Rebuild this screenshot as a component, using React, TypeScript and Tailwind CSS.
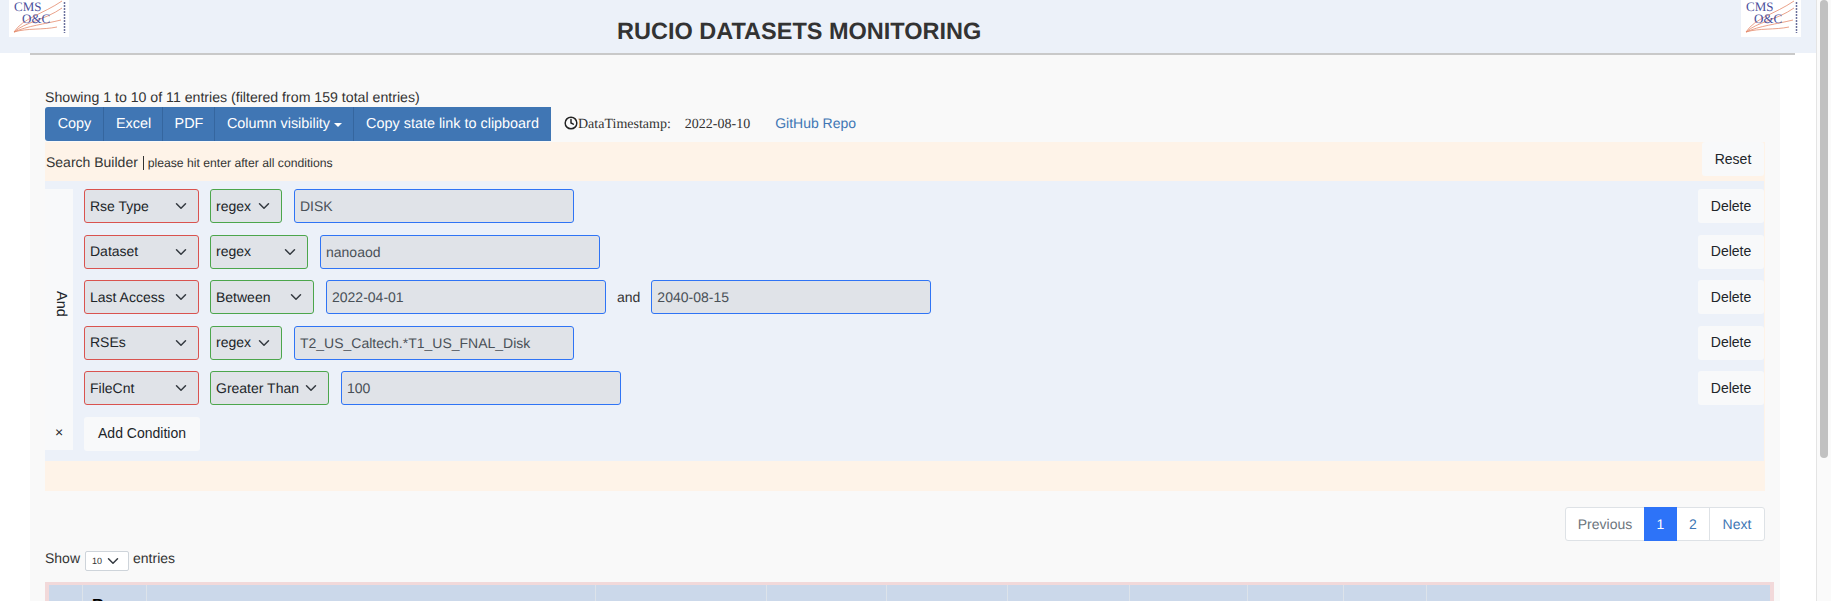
import { Clock } from "lucide-react"

const sans = "font-['Liberation_Sans',Arial,sans-serif]"

const conditions = [
  { column: "Rse Type", op: "regex", opWidth: "w-[72px]", values: ["DISK"] },
  { column: "Dataset", op: "regex", opWidth: "w-[98px]", values: ["nanoaod"] },
  { column: "Last Access", op: "Between", opWidth: "w-[104px]", values: ["2022-04-01", "2040-08-15"] },
  { column: "RSEs", op: "regex", opWidth: "w-[72px]", values: ["T2_US_Caltech.*T1_US_FNAL_Disk"] },
  { column: "FileCnt", op: "Greater Than", opWidth: "w-[119px]", values: ["100"] },
]

const columns = ["w-[34px]", "w-[64px]", "w-[449px]", "w-[171px]", "w-[120px]", "w-[121px]", "w-[122px]", "w-[118px]", "w-[96px]", "w-[83px]", "flex-1"]

function Chevron({ className = "w-3 h-3" }: { className?: string }) {
  return (
    <svg viewBox="0 0 16 16" className={className} fill="none" stroke="#343a40" strokeWidth="2" strokeLinecap="round" strokeLinejoin="round">
      <path d="M2 5l6 6 6-6" />
    </svg>
  )
}

function Logo() {
  return (
    <svg viewBox="0 0 60 37" className="w-[60px] h-[37px] bg-white shrink-0">
      <g fill="none" stroke="#e58a6c" strokeWidth="0.8">
        <path d="M5 32C14 18 34 14 53 1" />
        <path d="M5 32C16 22 36 20 53 8" />
        <path d="M5 32C18 26 36 24 52 20" />
        <path d="M5 32C18 28 34 30 48 27" />
      </g>
      <text x="5" y="11" fontFamily="Liberation Serif" fontSize="13" fill="#4a4f9c">CMS</text>
      <text x="13" y="23" fontFamily="Liberation Serif" fontSize="13" fill="#4a4f9c">O&amp;C</text>
      <path d="M55.5 2v31" stroke="#6a6f9c" strokeWidth="1.5" strokeDasharray="2 1" />
    </svg>
  )
}

function Select({ label, className }: { label: string; className: string }) {
  return (
    <div className={`h-[34px] shrink-0 flex items-center justify-between pl-[5px] pr-[11px] rounded-[3px] border bg-[#e0e3e8] text-[14px] text-[#212529] ${className}`}>
      <span>{label}</span>
      <Chevron />
    </div>
  )
}

function ValueInput({ value }: { value: string }) {
  return (
    <div className="h-[34px] w-[280px] shrink-0 flex items-center pl-[5px] pt-[1px] rounded-[3px] border border-[#2f74f5] bg-[#e0e3e8] text-[14px] text-[#495057]">
      {value}
    </div>
  )
}

export default function App() {
  return (
    <div className={`flex h-screen overflow-hidden bg-white text-[#212529] text-[14px] [text-rendering:geometricPrecision] ${sans}`}>
      <div className="flex-1 min-w-0">
        {/* Header */}
        <div className="h-[53px] bg-[#ecf1f9] flex items-start pl-[9px] pr-[15px]">
          <Logo />
          <h1 className="ml-[548px] mt-[18px] text-[23.5px] leading-[26px] font-bold text-[#333] whitespace-nowrap">
            RUCIO DATASETS MONITORING
          </h1>
          <div className="ml-auto">
            <Logo />
          </div>
        </div>
        <div className="h-[2px] ml-[30px] mr-[21px] bg-[#c9c9c9]" />

        {/* Panel */}
        <div className="ml-[30px] w-[1750px] h-[600px] bg-[#f9f9f9] pl-[15px] pt-[32px]">
          <div className="leading-[20px] text-[14.15px] text-[#333]">Showing 1 to 10 of 11 entries (filtered from 159 total entries)</div>

          {/* Toolbar */}
          <div className="flex items-center h-[34px] w-[1720px]">
            <div className="flex h-full w-[506px] rounded-l-[3px] overflow-hidden bg-[#4076b4] text-white text-[14.4px] divide-x divide-[#35669f]">
              <div className="w-[59px] pl-px pt-px flex items-center justify-center">Copy</div>
              <div className="w-[59px] pl-px pt-px flex items-center justify-center">Excel</div>
              <div className="w-[52px] pl-px pt-px flex items-center justify-center">PDF</div>
              <div className="w-[139px] pl-px pt-px flex items-center justify-center gap-1">
                Column visibility
                <span className="w-0 h-0 border-x-[4px] border-x-transparent border-t-[4px] border-t-white" />
              </div>
              <div className="flex-1 pt-px flex items-center justify-center">Copy state link to clipboard</div>
            </div>
            <div className="flex items-center h-full pl-[13px] font-['Liberation_Serif',serif] text-[#333]">
              <Clock className="w-[14px] h-[14px] mb-[3px] text-[#222]" strokeWidth={2.5} />
              <span className="mt-[1px]">DataTimestamp:</span>
              <span className="ml-[14px] mt-[1px]">2022-08-10</span>
            </div>
            <a className="ml-[25px] text-[#4076b4] mb-[2px]" href="#">GitHub Repo</a>
          </div>

          {/* Search builder */}
          <div className="mt-[1px] w-[1720px]">
            <div className="h-[39px] bg-[#fef3e8] flex items-start justify-between">
              <div className="mt-[10px] leading-[20px] text-[#333] pl-[1px]">
                Search Builder <span className="border-l border-[#333] ml-[1px] pl-[4px] text-[12.2px]">please hit enter after all conditions</span>
              </div>
              <button className="w-[62px] h-[34px] mr-px rounded-[3px] bg-[#f8f9fa] text-[#212529]">Reset</button>
            </div>
            <div className="h-[280px] bg-[#ecf1f9] pt-[8px] flex border-r border-[#fef3e8]">
              <div className="w-[28px] h-[261px] mr-[11px] bg-[#f8f9fa] flex flex-col items-center">
                <div className="flex-1 flex items-center justify-center pl-[2px]">
                  <span className="[writing-mode:vertical-rl] text-[14.5px]">And</span>
                </div>
                <div className="h-[32px] text-[14px] leading-[28px]">×</div>
              </div>
              <div className="flex-1 flex flex-col gap-[11.5px]">
                {conditions.map((c) => (
                  <div key={c.column} className="flex items-center">
                    <Select label={c.column} className="w-[115px] border-[#d9534f]" />
                    <Select label={c.op} className={`ml-[11px] border-[#4ca64c] ${c.opWidth}`} />
                    <div className="ml-[12px]">
                      <ValueInput value={c.values[0]} />
                    </div>
                    {c.values[1] && (
                      <>
                        <span className="mx-[11px] text-[#333]">and</span>
                        <ValueInput value={c.values[1]} />
                      </>
                    )}
                    <button className="ml-auto w-[66px] h-[34px] rounded-[3px] bg-[#f8f9fa] text-[#212529]">Delete</button>
                  </div>
                ))}
                <button className="w-[116px] h-[34px] rounded-[3px] bg-[#f8f9fa] text-[#212529]">Add Condition</button>
              </div>
            </div>
            <div className="h-[30px] bg-[#fef3e8]" />
          </div>

          {/* Pagination */}
          <div className="mt-[16px] w-[1720px] flex justify-end">
            <div className="flex h-[34px] rounded-[3px] border border-[#dee2e6] bg-white text-[14px]">
              <div className="w-[78px] flex items-center justify-center text-[#6c757d]">Previous</div>
              <div className="w-[33px] -my-px flex items-center justify-center bg-[#2d73f8] text-white">1</div>
              <div className="w-[33px] flex items-center justify-center text-[#4076b4] border-r border-[#dee2e6]">2</div>
              <div className="w-[54px] flex items-center justify-center text-[#4076b4]">Next</div>
            </div>
          </div>

          {/* Length menu */}
          <div className="mt-[10px] h-[20px] flex items-start text-[#333] leading-[14px]">
            Show
            <div className="ml-[5px] w-[44px] h-[20px] flex items-center justify-between pl-[6px] pr-[9px] rounded-[2px] border border-[#ced4da] bg-white text-[9px]">
              10
              <Chevron className="w-[12px] h-[12px]" />
            </div>
            <span className="ml-[4px]">entries</span>
          </div>

          {/* Table */}
          <div className="mt-[11px] w-[1729px] h-[40px] pt-[3px] px-[4px] bg-[#f2d9da]">
            <div className="flex h-full bg-[#cbd8ea] divide-x divide-[#dde3ea]">
              {columns.map((w, i) => (
                <div key={i} className={`${w} pl-[9px] pt-[11px] font-bold text-[16px] text-black leading-[20px]`}>
                  {i === 1 ? "Rse Type" : ""}
                </div>
              ))}
            </div>
          </div>
        </div>
      </div>

      {/* Scrollbar */}
      <div className="w-[15px] h-full border-l border-[#e4e4e4] bg-[#fafafa] pl-[3px]">
        <div className="w-[8px] h-[458px] rounded-[4px] bg-[#c1c1c1]" />
      </div>
    </div>
  )
}
